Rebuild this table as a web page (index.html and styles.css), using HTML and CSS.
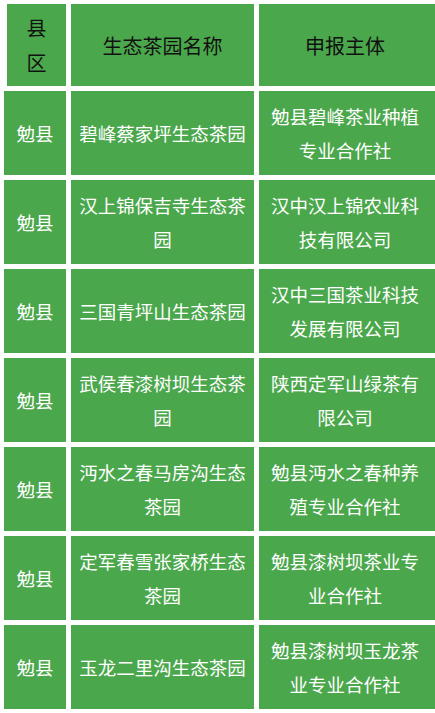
FILE: index.html
```html
<!DOCTYPE html>
<html lang="zh">
<head>
<meta charset="utf-8">
<link rel="stylesheet" href="styles.css">
</head>
<body>
<div class="table">
  <div class="row head">
    <div class="cell c1">县区</div>
    <div class="cell c2">生态茶园名称</div>
    <div class="cell c3">申报主体</div>
  </div>
  <div class="row">
    <div class="cell c1">勉县</div>
    <div class="cell c2">碧峰蔡家坪生态茶园</div>
    <div class="cell c3">勉县碧峰茶业种植专业合作社</div>
  </div>
  <div class="row">
    <div class="cell c1">勉县</div>
    <div class="cell c2">汉上锦保吉寺生态茶园</div>
    <div class="cell c3">汉中汉上锦农业科技有限公司</div>
  </div>
  <div class="row">
    <div class="cell c1">勉县</div>
    <div class="cell c2">三国青坪山生态茶园</div>
    <div class="cell c3">汉中三国茶业科技发展有限公司</div>
  </div>
  <div class="row">
    <div class="cell c1">勉县</div>
    <div class="cell c2">武侯春漆树坝生态茶园</div>
    <div class="cell c3">陕西定军山绿茶有限公司</div>
  </div>
  <div class="row">
    <div class="cell c1">勉县</div>
    <div class="cell c2">沔水之春马房沟生态茶园</div>
    <div class="cell c3">勉县沔水之春种养殖专业合作社</div>
  </div>
  <div class="row">
    <div class="cell c1">勉县</div>
    <div class="cell c2">定军春雪张家桥生态茶园</div>
    <div class="cell c3">勉县漆树坝茶业专业合作社</div>
  </div>
  <div class="row">
    <div class="cell c1">勉县</div>
    <div class="cell c2">玉龙二里沟生态茶园</div>
    <div class="cell c3">勉县漆树坝玉龙茶业专业合作社</div>
  </div>
</div>
</body>
</html>
```

FILE: styles.css
```css
html, body {
  margin: 0;
  padding: 0;
  background: #ffffff;
  overflow: hidden;
}

.table {
  padding: 4px 0 0 4px;
  display: flex;
  flex-direction: column;
  gap: 5px;
  font-family: "Noto Sans CJK SC", "Noto Sans", sans-serif;
}

.row {
  display: grid;
  grid-template-columns: 62px 183px 176px;
  column-gap: 5px;
  height: 84px;
}

.cell {
  background: #4ba74c;
  color: #ffffff;
  font-size: 18.5px;
  line-height: 34px;
  display: flex;
  align-items: center;
  justify-content: center;
  text-align: center;
  padding: 0 6px;
}

.c1 {
  padding: 0 4px;
}

.c3 {
  padding: 0 8px 0 4px;
}

.head {
  height: 82px;
}

.head .cell {
  color: #111111;
  font-size: 20px;
  line-height: 35px;
}

.head .c1 {
  margin-left: 3px;
  padding: 0 10px;
}
```
